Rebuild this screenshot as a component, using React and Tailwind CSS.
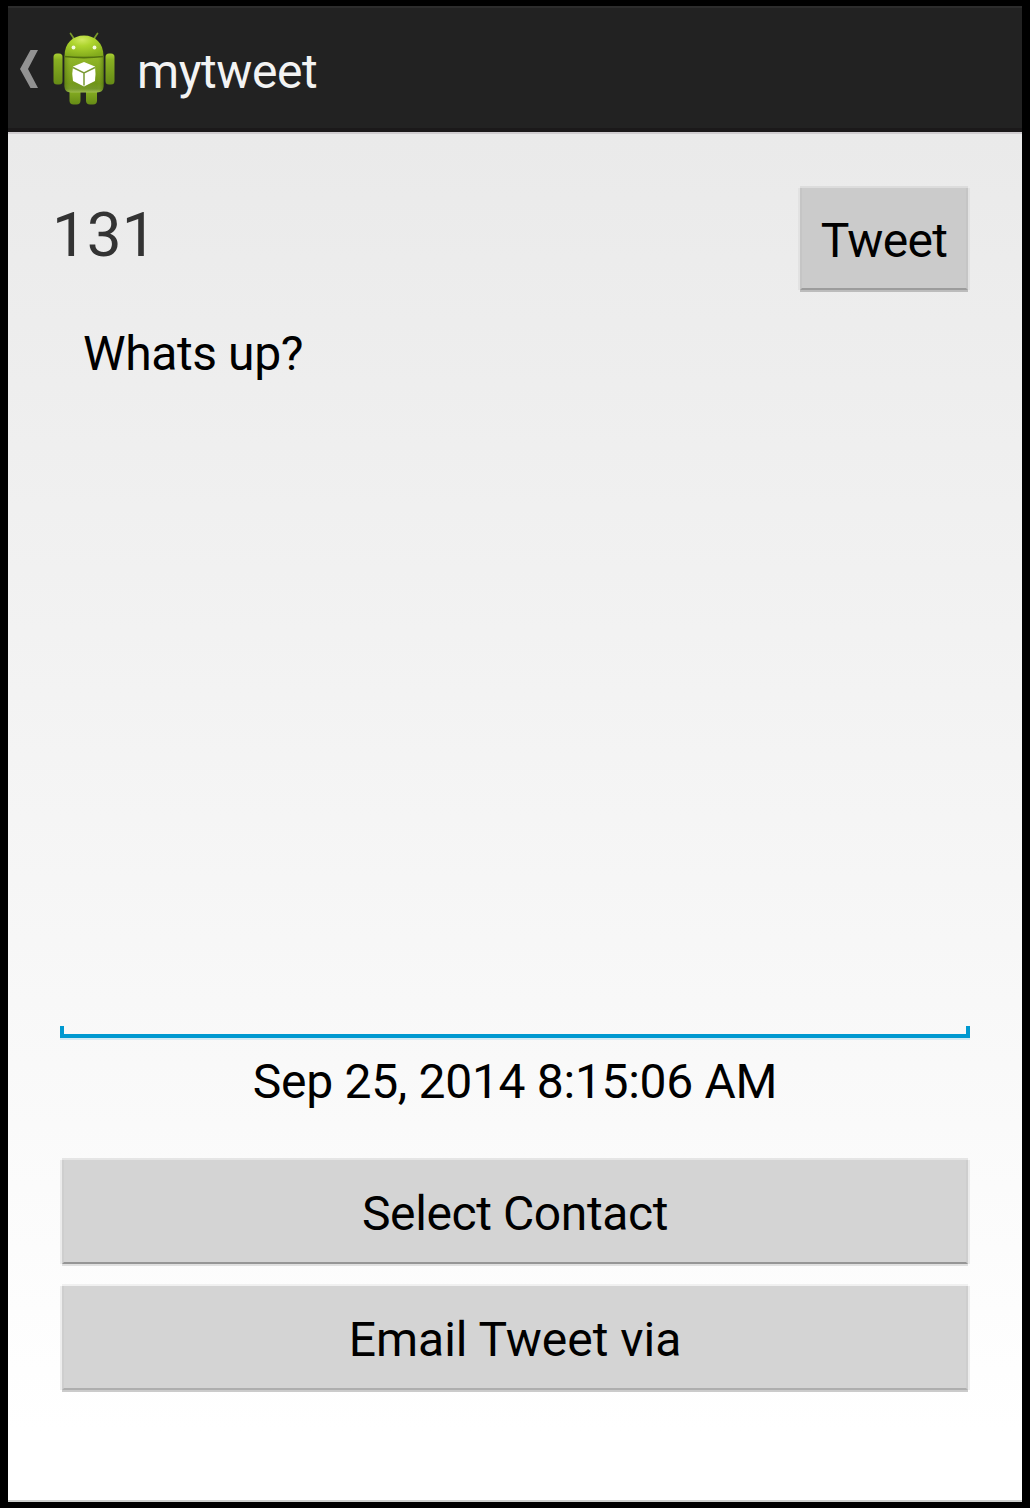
function AndroidIcon() {
  return (
    <svg className="block h-[76px] w-[64px]" viewBox="52 31 64 76" fill="none">
      <defs>
        <radialGradient id="head" cx="0.45" cy="0.2" r="0.8">
          <stop offset="0" stopColor="#d0e860" />
          <stop offset="0.35" stopColor="#aed52e" />
          <stop offset="1" stopColor="#83ab1c" />
        </radialGradient>
        <linearGradient id="body" x1="0" y1="0" x2="0" y2="1">
          <stop offset="0" stopColor="#94ba28" />
          <stop offset="0.75" stopColor="#6f9418" />
          <stop offset="0.9" stopColor="#73962a" />
          <stop offset="1" stopColor="#a0bd54" />
        </linearGradient>
        <linearGradient id="side" x1="0" y1="0" x2="1" y2="0">
          <stop offset="0" stopColor="#4f6f0c" stopOpacity="0.5" />
          <stop offset="0.16" stopColor="#8fb52a" stopOpacity="0.2" />
          <stop offset="0.84" stopColor="#8fb52a" stopOpacity="0" />
          <stop offset="1" stopColor="#4f6f0c" stopOpacity="0.6" />
        </linearGradient>
        <linearGradient id="limb" x1="0" y1="0" x2="0" y2="1">
          <stop offset="0" stopColor="#a9cf32" />
          <stop offset="0.2" stopColor="#88b022" />
          <stop offset="1" stopColor="#668b16" />
        </linearGradient>
      </defs>
      <path d="M70.500 33.500l3.400 5M97.500 33.500l-3.400 5" stroke="#78992a" strokeWidth="1.700" strokeLinecap="round" />
      <rect x="69.500" y="86" width="11" height="18.500" rx="4" fill="url(#limb)" />
      <rect x="86" y="86" width="11" height="18.500" rx="4" fill="url(#limb)" />
      <rect x="53.500" y="53.500" width="9" height="31" rx="3.500" fill="url(#limb)" />
      <rect x="105.500" y="53.500" width="9" height="31" rx="3.500" fill="url(#limb)" />
      <path d="M64.500 56h39v30q0 6.500-6.500 6.500h-26q-6.500 0-6.500-6.500z" fill="url(#body)" />
      <path d="M64.500 56h39v30q0 6.500-6.500 6.500h-26q-6.500 0-6.500-6.500z" fill="url(#side)" />
      <path d="M64.500 56C64.500 43 73 35.500 84 35.500s19.500 7.500 19.500 20.500q-19.500 2-39 0z" fill="url(#head)" />
      <path d="M64.500 56.500q19.500 2.200 39 0" stroke="#53710f" strokeWidth="1.700" />
      <circle cx="73.500" cy="47.500" r="1.900" fill="#f4fbdc" />
      <circle cx="94.500" cy="47.500" r="1.900" fill="#f4fbdc" />
      <path d="M84 62l11 4.500q1 8 0 14.500L84 86.500l-11-5.500q-1.500-7 0-14.500z" fill="#fff" />
      <path d="M73 67.500l11 5.500L95 67.500M84 73V85.500" stroke="#7a9a35" strokeWidth="1.500" />
    </svg>
  );
}

function WideButton({ children, className }) {
  return (
    <button
      className={
        "flex h-[104px] w-[906px] shrink-0 items-center justify-center border-x-2 border-b-2 border-x-[#cecece] bg-[#d4d4d4] pt-[6px] text-[48px] leading-none text-black " +
        className
      }
    >
      {children}
    </button>
  );
}

export default function App() {
  return (
    <div className="h-[1508px] w-[1030px] bg-black px-[8px] pt-[6px] font-['Roboto',sans-serif]">
      <div className="flex h-[1496px] flex-col">
        <header className="flex h-[126px] shrink-0 items-center border-t-2 border-b-4 border-t-[#2c2c2c] border-b-[#1b191a] bg-[#222] pt-px">
          <svg className="ml-[12px] block h-[38px] w-[18px]" viewBox="0 0 18 38">
            <path d="M10.500 0H18L8 19l10 19h-7.500L0 19z" fill="#929292" />
          </svg>
          <div className="ml-[14px]">
            <AndroidIcon />
          </div>
          <h1 className="ml-[21px] mt-[7px] text-[48px] leading-none tracking-[-0.4px] text-[#f3f3f3]">mytweet</h1>
        </header>
        <main className="flex grow flex-col border-t-2 border-b-2 border-t-[#d0cdd0] border-b-[#cdcfcd] bg-linear-to-b from-[#eaeaea] to-white to-95% px-[54px]">
          <div className="mt-[54px] flex h-[104px] items-start justify-between">
            <div className="-ml-[10px] mt-[16px] text-[62px] leading-none text-[#333]">131</div>
            <button className="flex h-[102px] w-[168px] items-center justify-center border-x-2 border-b-2 border-x-[#c5c5c5] border-b-[#9c9c9c] bg-[#cbcbcb] pt-[5px] text-[48px] leading-none tracking-[-0.7px] text-black shadow-[0_2px_0_#bcbcbc,-2px_0_0_#e2e2e2,2px_0_0_#e2e2e2,0_-2px_0_#dcdcdc]">
              Tweet
            </button>
          </div>
          <div className="-mx-[2px] flex h-[746px] flex-col">
            <div className="ml-[23px] mt-[38px] text-[48px] leading-none tracking-[-0.4px] text-black">Whats up?</div>
            <div className="mt-auto h-[12px] border-x-4 border-b-4 border-[#0099d0] shadow-[0_2px_0_#d3eaf4]" />
          </div>
          <div className="mt-[20px] h-[48px] text-center text-[48px] leading-none tracking-[-0.3px] text-black">Sep 25, 2014 8:15:06 AM</div>
          <WideButton className="mt-[54px] border-b-[#969696] tracking-[-0.4px] shadow-[0_2px_0_#e0e0e0,-2px_0_0_#ebebeb,2px_0_0_#ebebeb,0_-2px_0_#e5e5e5]">
            Select Contact
          </WideButton>
          <WideButton className="mt-[22px] border-b-[#aeaeae] shadow-[0_2px_0_#cbcbcb,-2px_0_0_#ededed,2px_0_0_#ededed,0_-2px_0_#f0f0f0]">
            Email Tweet via
          </WideButton>
        </main>
      </div>
    </div>
  );
}
